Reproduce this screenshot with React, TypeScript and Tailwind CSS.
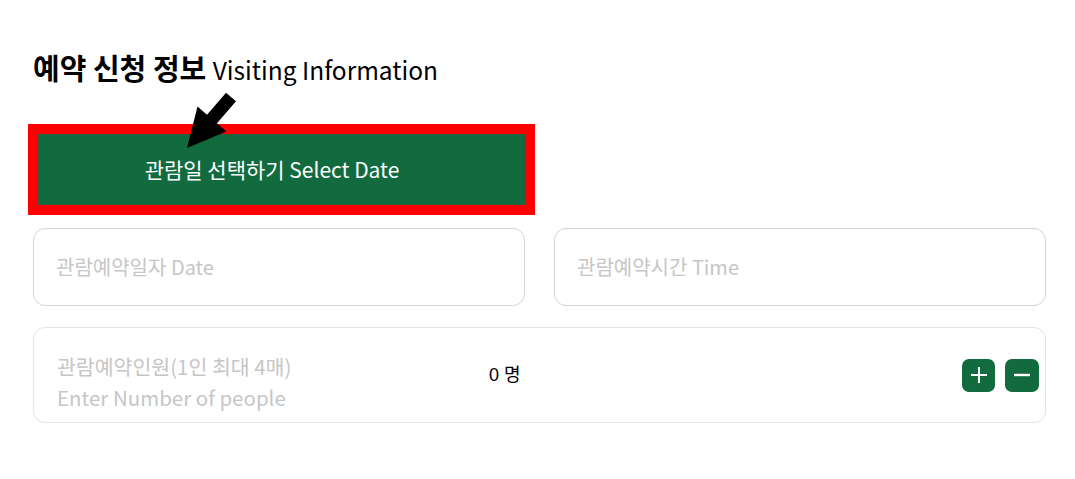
import { useState } from 'react';

const font = { fontFamily: '"Noto Sans CJK KR", "Noto Sans", sans-serif' };

function Arrow() {
  return (
    <svg
      className="absolute left-[181px] top-[88px] pointer-events-none"
      width="60"
      height="64"
      viewBox="0 0 60 64"
    >
      <polygon
        points="6,60 16.5,18.5 26,26.7 45,4.7 55,13.3 36,35.3 45.5,43.5"
        fill="#000"
      />
    </svg>
  );
}

export default function App() {
  const [count, setCount] = useState(0);

  return (
    <div className="relative min-h-screen bg-white pl-[33px] pr-[29px] pt-[46px]" style={font}>
      <h2 className="text-[29px] leading-[42px] text-black">
        <span className="font-bold">예약 신청 정보</span>{' '}
        <span className="font-normal text-[24.5px]">Visiting Information</span>
      </h2>

      <Arrow />

      <div className="mt-[33px] -ml-[5px] w-[507px] border-[10px] border-[#ff0000]">
        <button
          type="button"
          className="flex h-[71px] w-full items-center justify-center border border-[#2d5a3f] bg-[#116b3f] pr-[19px] text-[21px] text-white"
        >
          관람일 선택하기 Select Date
        </button>
      </div>

      <div className="mt-[13px] grid grid-cols-2 gap-[29px]">
        <div className="flex h-[78px] items-center rounded-[12px] border border-[#d4d4d4] px-[22px] text-[20px] text-[#c6c6c6]">
          관람예약일자 Date
        </div>
        <div className="flex h-[78px] items-center rounded-[12px] border border-[#d4d4d4] px-[22px] text-[20px] text-[#c6c6c6]">
          관람예약시간 Time
        </div>
      </div>

      <div className="mt-[21px] flex h-[96px] items-center rounded-[12px] border border-[#e3e3e3] pl-[23px] pr-[6px]">
        <div className="w-[432px] pt-[14px] text-[20.5px] leading-[31px] text-[#c6c6c6]">
          <div>관람예약인원(1인 최대 4매)</div>
          <div>Enter Number of people</div>
        </div>
        <div className="text-[18px] text-black" style={{ fontFamily: '"Liberation Sans", "Noto Sans CJK KR", sans-serif' }}>
          {count} 명
        </div>
        <div className="ml-auto flex gap-[10px]">
          <button
            type="button"
            onClick={() => setCount((c) => Math.min(4, c + 1))}
            className="flex h-[33px] w-[33px] items-center justify-center rounded-[7px] bg-[#116b3f]"
          >
            <svg width="20" height="20" viewBox="0 0 20 20">
              <path d="M10 2v16M2 10h16" stroke="#fff" strokeWidth="2" />
            </svg>
          </button>
          <button
            type="button"
            onClick={() => setCount((c) => Math.max(0, c - 1))}
            className="flex h-[33px] w-[34px] items-center justify-center rounded-[7px] bg-[#116b3f]"
          >
            <svg width="20" height="20" viewBox="0 0 20 20">
              <path d="M2 10h16" stroke="#fff" strokeWidth="2.4" />
            </svg>
          </button>
        </div>
      </div>
    </div>
  );
}
